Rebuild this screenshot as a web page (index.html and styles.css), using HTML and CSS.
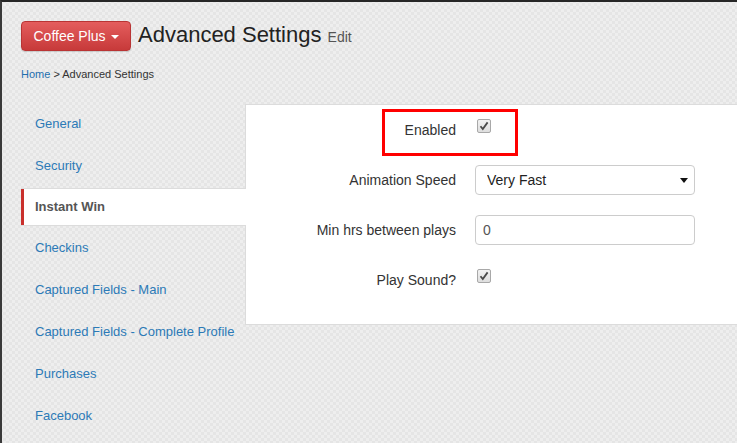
FILE: index.html
```html
<!DOCTYPE html>
<html lang="en">
<head>
  <meta charset="UTF-8" />
  <meta name="viewport" content="width=device-width, initial-scale=1.0"/>
  <title>Advanced Settings – Coffee Plus</title>
  <link rel="stylesheet" href="styles.css">
</head>
<body>

  <div class="page">
    <div class="page-head">
      <button class="brand-btn" type="button">Coffee Plus <span class="caret"></span></button>
      <h1>Advanced Settings <small>Edit</small></h1>
    </div>

    <div class="crumbs"><a href="#">Home</a> &gt; Advanced Settings</div>

    <div class="settings">
      <ul class="side-nav">
        <li><a href="#">General</a></li>
        <li><a href="#">Security</a></li>
        <li class="active"><a href="#">Instant Win</a></li>
        <li><a href="#">Checkins</a></li>
        <li><a href="#">Captured Fields - Main</a></li>
        <li><a href="#">Captured Fields - Complete Profile</a></li>
        <li><a href="#">Purchases</a></li>
        <li><a href="#">Facebook</a></li>
      </ul>

      <form class="panel">
        <div class="highlight"></div>

        <label>Enabled</label>
        <div class="field"><span class="check"><svg width="10" height="10" viewBox="0 0 10 10"><path d="M1.5 5.2 L3.8 8 L8.6 1.4" fill="none" stroke="#4a4a4a" stroke-width="1.8"/></svg></span></div>

        <label for="speed">Animation Speed</label>
        <div class="field select-wrap">
          <select id="speed">
            <option>Very Fast</option>
            <option>Fast</option>
            <option>Normal</option>
            <option>Slow</option>
          </select>
        </div>

        <label for="minHrs">Min hrs between plays</label>
        <div class="field"><input type="text" id="minHrs" value="0" /></div>

        <label>Play Sound?</label>
        <div class="field"><span class="check"><svg width="10" height="10" viewBox="0 0 10 10"><path d="M1.5 5.2 L3.8 8 L8.6 1.4" fill="none" stroke="#4a4a4a" stroke-width="1.8"/></svg></span></div>
      </form>
    </div>
  </div>

</body>
</html>
```

FILE: styles.css
```css
    html, body {
      height: 100%;
    }

    body {
      margin: 0;
      font-family: "Liberation Sans", Arial, sans-serif;
      color: #333;
      border-top: 2px solid #262626;
      border-left: 2px solid #3a3a3a;
      box-sizing: border-box;
      background-color: #eaeaea;
      /* fine checker texture */
      background-image: conic-gradient(#e5e5e5 25%, #eeeeee 0 50%, #e5e5e5 0 75%, #eeeeee 0);
      background-size: 6px 6px;
    }

    .page {
      padding: 19px 0 0 19px;
    }

    .page-head {
      display: flex;
      align-items: flex-start;
    }

    .brand-btn {
      height: 30px;
      width: 110px;
      padding: 0;
      border: 1px solid #b93434;
      border-radius: 4px;
      background: linear-gradient(#e45d5d, #c73a3a);
      color: #fff;
      font-family: inherit;
      font-size: 14px;
      cursor: pointer;
      box-shadow: 0 1px 1px rgba(0,0,0,0.15);
    }

    .caret {
      display: inline-block;
      width: 0;
      height: 0;
      margin-left: 1px;
      vertical-align: middle;
      border-top: 4px solid #fff;
      border-left: 4px solid transparent;
      border-right: 4px solid transparent;
    }

    h1 {
      margin: 0 0 0 7px;
      font-size: 22px;
      line-height: 28px;
      font-weight: normal;
      color: #222;
    }

    h1 small {
      font-size: 14px;
      color: #555;
    }

    .crumbs {
      margin-top: 16px;
      font-size: 11px;
      line-height: 15px;
      color: #333;
    }

    .crumbs a {
      color: #1f6fae;
      text-decoration: none;
    }

    .settings {
      display: flex;
      margin-top: 22px;
    }

    .side-nav {
      list-style: none;
      margin: 0 -1px 0 0;
      padding: 0;
      width: 225px;
      flex: none;
    }

    .side-nav li + li {
      margin-top: 2px;
    }

    .side-nav a {
      display: block;
      padding: 10px 14px;
      font-size: 13px;
      line-height: 20px;
      color: #2c7ab7;
      text-decoration: none;
      white-space: nowrap;
    }

    .side-nav .active {
      position: relative;
      z-index: 1;
      background: #fff;
      border-top: 1px solid #dcdcdc;
      border-bottom: 1px solid #dcdcdc;
    }

    .side-nav .active a {
      padding: 8px 14px 8px 11px;
      border-left: 3px solid #c9302c;
      color: #555;
      font-weight: bold;
    }

    .panel {
      position: relative;
      flex: 1;
      align-self: flex-start;
      display: grid;
      grid-template-columns: 210px 220px;
      grid-auto-rows: 30px;
      column-gap: 19px;
      row-gap: 20px;
      padding: 10px 0 29px;
      background: #fff;
      border: 1px solid #dcdcdc;
      border-right: none;
    }

    .panel label {
      text-align: right;
      font-size: 14px;
      line-height: 30px;
      color: #333;
    }

    .field {
      display: flex;
      align-items: flex-start;
    }

    .check {
      display: flex;
      align-items: center;
      justify-content: center;
      width: 12px;
      height: 12px;
      margin: 4px 0 0 2px;
      border: 1px solid #a8a8a8;
      border-radius: 2px;
      background: linear-gradient(#f2f2f2, #dedede);
    }

    .select-wrap {
      position: relative;
    }

    .select-wrap::after {
      content: '';
      position: absolute;
      right: 7px;
      top: 13px;
      border-top: 5px solid #111;
      border-left: 4px solid transparent;
      border-right: 4px solid transparent;
      pointer-events: none;
    }

    select, input {
      box-sizing: border-box;
      width: 220px;
      height: 30px;
      border: 1px solid #ccc;
      border-radius: 4px;
      background: #fff;
      font-family: inherit;
      font-size: 14px;
      margin: 0;
    }

    select {
      appearance: none;
      -webkit-appearance: none;
      padding: 0 11px;
      color: #222;
    }

    input {
      padding: 0 7px;
      color: #555;
    }

    /* red callout drawn round the Enabled row */
    .highlight {
      position: absolute;
      left: 136px;
      top: 4px;
      width: 136px;
      height: 47px;
      box-sizing: border-box;
      border: 3px solid #f00;
      pointer-events: none;
    }
```
